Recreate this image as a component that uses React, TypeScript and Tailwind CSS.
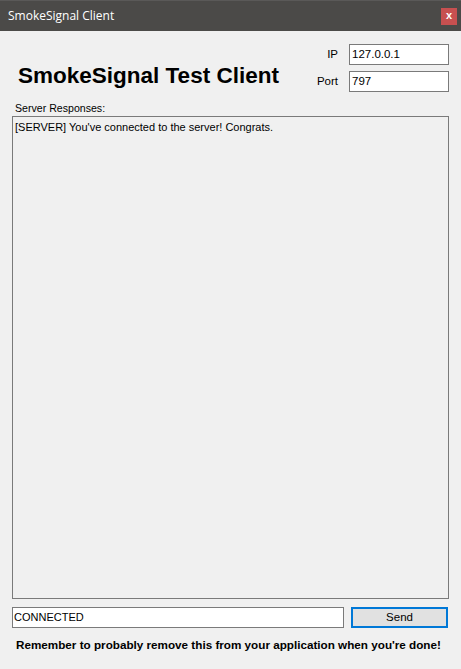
import React from "react";

const sans = { fontFamily: '"Liberation Sans", Arial, sans-serif' };

export default function App() {
  return (
    <div className="w-[461px] h-[669px] flex flex-col bg-[#f0f0f0] text-black text-[11px]" style={sans}>
      {/* title bar */}
      <div className="h-[31px] flex items-center bg-[#4b4a48] border-t border-[#5a5958] pl-2 pr-1">
        <span className="text-white text-[12px] flex-1" style={{ fontFamily: '"Open Sans", "Noto Sans", sans-serif' }}>
          SmokeSignal Client
        </span>
        <div className="w-[16px] h-[17px] bg-[#c75050] text-white text-[11px] font-bold flex items-center justify-center leading-none pb-[2px]">
          x
        </div>
      </div>

      {/* header */}
      <div className="flex items-start pt-[13px] pl-[18px] pr-[12px]">
        <h1 className="flex-1 font-bold text-[22.5px] leading-none mt-[21px]">SmokeSignal Test Client</h1>
        <div className="grid grid-cols-[auto_100px] gap-x-[11px] gap-y-[6px] items-center">
          <span className="text-right text-[11.5px]">IP</span>
          <div className="h-[21px] bg-white border border-[#7a7a7a] px-[2px] text-[11.5px] flex items-center">127.0.0.1</div>
          <span className="text-right text-[11.5px]">Port</span>
          <div className="h-[21px] bg-white border border-[#7a7a7a] px-[2px] text-[11.5px] flex items-center">797</div>
        </div>
      </div>

      {/* responses */}
      <div className="flex-1 flex flex-col px-[12px] pt-[10px] pr-[12px]">
        <span className="pl-[3px] text-[10.6px] leading-[13px] mb-[1px]">Server Responses:</span>
        <div className="flex-1 border border-[#7a7a7a] bg-[#f0f0f0] px-[2px] pt-[3px] text-[11px] leading-[14px]">
          [SERVER] You've connected to the server! Congrats.
        </div>
      </div>

      {/* send row */}
      <div className="flex items-center gap-[7px] px-[12px] pt-[8px] pr-[13px]">
        <div className="flex-1 h-[21px] bg-white border border-[#7a7a7a] px-[1px] text-[11px] flex items-center">CONNECTED</div>
        <button className="w-[97px] h-[21px] bg-[#e1e1e1] border-2 border-[#0078d7] text-[11.5px] flex items-center justify-center">
          Send
        </button>
      </div>

      <div className="pl-[16px] pt-[10px] pb-[17px] font-bold text-[11.7px] leading-[14px]">
        Remember to probably remove this from your application when you're done!
      </div>
    </div>
  );
}
